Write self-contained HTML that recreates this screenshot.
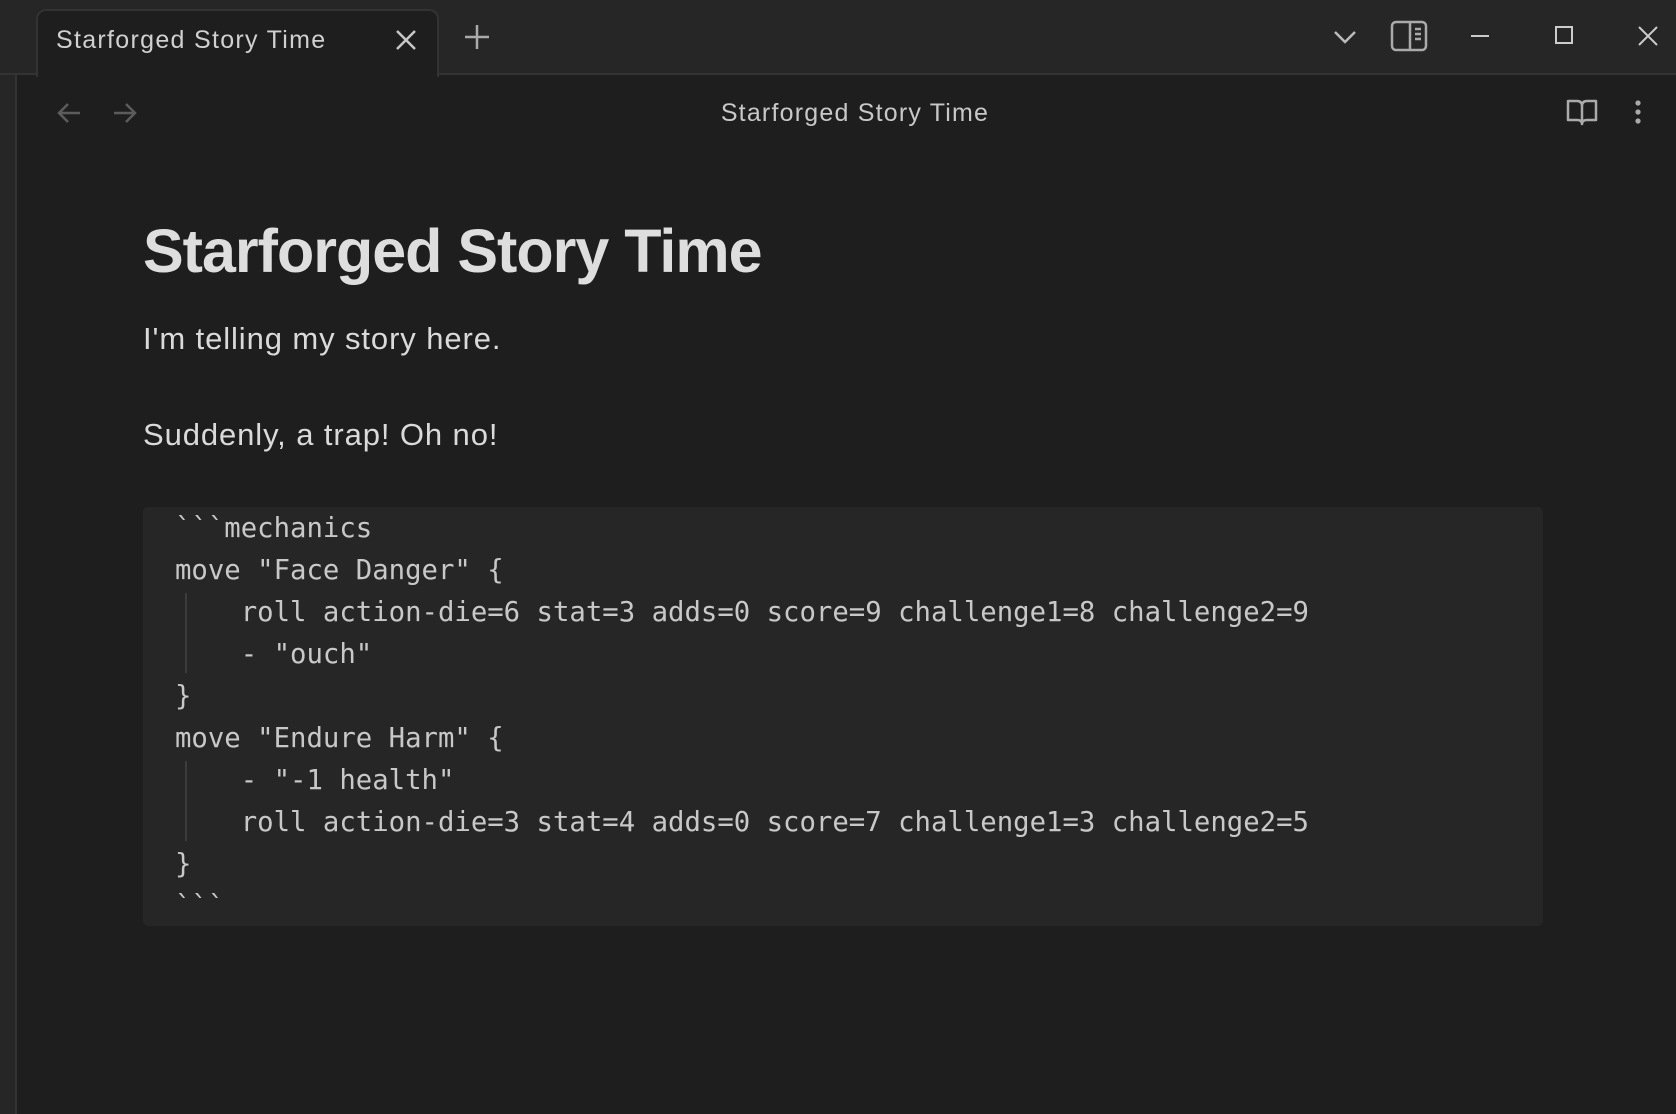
<!DOCTYPE html>
<html><head><meta charset="utf-8"><style>
*{margin:0;padding:0;box-sizing:border-box}
body{width:1676px;height:1114px;background:#1e1e1e;overflow:hidden;position:relative;font-family:"Liberation Sans",sans-serif;color:#dadada}
.top{position:absolute;left:0;top:0;width:1676px;height:75px;background:#262626;border-bottom:2px solid #333}
.side{position:absolute;left:0;top:75px;width:17px;height:1039px;background:#262626;border-right:2px solid #333}
.tab{position:absolute;left:36px;top:9px;width:403px;height:68px;background:#1e1e1e;border:2px solid #333;border-bottom:none;border-radius:10px 10px 0 0}
.tab span{position:absolute;left:18px;top:15px;font-size:25px;letter-spacing:1.3px;color:#d0d0d0}
svg{position:absolute}
.title{position:absolute;left:0;width:1710px;text-align:center;top:99px;font-size:25px;letter-spacing:1.2px;color:#c8c8c8}
h1{position:absolute;left:143px;top:216px;font-size:61px;font-weight:bold;color:#dedede;letter-spacing:-1px}
p{position:absolute;left:143px;font-size:31px;letter-spacing:0.9px;color:#dadada}
.code{position:absolute;left:143px;top:507px;width:1400px;height:419px;background:#262626;border-radius:5px}
pre{position:absolute;left:32px;top:1px;margin:0;font-family:"DejaVu Sans Mono","Liberation Mono",monospace;font-size:27.3px;color:#c8c8c8;line-height:42px;z-index:2}
.g{position:absolute;left:42px;width:2px;background:#3c3c3c}
</style></head><body>
<div class="top"></div>
<div class="side"></div>
<div class="tab"><span>Starforged Story Time</span></div>
<svg style="left:395px;top:29px" width="22" height="22" viewBox="0 0 22 22"><path d="M2 2L20 20M20 2L2 20" stroke="#c8c8c8" stroke-width="2.5"/></svg>
<svg style="left:464px;top:24px" width="26" height="26" viewBox="0 0 26 26"><path d="M13 1V25M1 13H25" stroke="#aaa" stroke-width="2.5"/></svg>
<svg style="left:1333px;top:29px" width="24" height="16" viewBox="0 0 24 16"><path d="M2 3L12 13L22 3" stroke="#bbb" stroke-width="2.5" fill="none"/></svg>
<svg style="left:1390px;top:20px" width="38" height="32" viewBox="0 0 38 32"><rect x="2" y="2" width="34" height="28" rx="4" stroke="#aaa" stroke-width="2.5" fill="none"/><path d="M20 2V30M25 9H31M25 14H31M25 19H31" stroke="#aaa" stroke-width="2.5"/></svg>
<svg style="left:1470px;top:30px" width="20" height="12"><path d="M1 6H19" stroke="#ccc" stroke-width="2"/></svg>
<svg style="left:1554px;top:25px" width="20" height="20"><rect x="2" y="2" width="16" height="16" stroke="#ccc" stroke-width="2" fill="none"/></svg>
<svg style="left:1637px;top:25px" width="22" height="22"><path d="M2 2L20 20M20 2L2 20" stroke="#ccc" stroke-width="2"/></svg>
<svg style="left:56px;top:101px" width="26" height="24"><path d="M24 12H3M12 3L3 12L12 21" stroke="#5c5c5c" stroke-width="2.5" fill="none"/></svg>
<svg style="left:112px;top:101px" width="26" height="24"><path d="M2 12H23M14 3L23 12L14 21" stroke="#5c5c5c" stroke-width="2.5" fill="none"/></svg>
<div class="title">Starforged Story Time</div>
<svg style="left:1566px;top:98px" width="32" height="30" viewBox="0 0 32 30"><path d="M2 3H11Q16 3 16 8V26Q16 22 11 22H2ZM30 3H21Q16 3 16 8V26Q16 22 21 22H30Z" stroke="#aaa" stroke-width="2.5" fill="none" stroke-linejoin="round"/></svg>
<svg style="left:1632px;top:99px" width="12" height="28"><circle cx="6" cy="4" r="2.6" fill="#aaa"/><circle cx="6" cy="13" r="2.6" fill="#aaa"/><circle cx="6" cy="22" r="2.6" fill="#aaa"/></svg>
<h1>Starforged Story Time</h1>
<p style="top:321px">I'm telling my story here.</p>
<p style="top:417px">Suddenly, a trap! Oh no!</p>
<div class="code">
<div class="g" style="top:86px;height:80px"></div>
<div class="g" style="top:254px;height:80px"></div>
<pre>&#96;&#96;&#96;mechanics
move "Face Danger" {
    roll action-die=6 stat=3 adds=0 score=9 challenge1=8 challenge2=9
    - "ouch"
}
move "Endure Harm" {
    - "-1 health"
    roll action-die=3 stat=4 adds=0 score=7 challenge1=3 challenge2=5
}
&#96;&#96;&#96;</pre>
</div>
</body></html>
